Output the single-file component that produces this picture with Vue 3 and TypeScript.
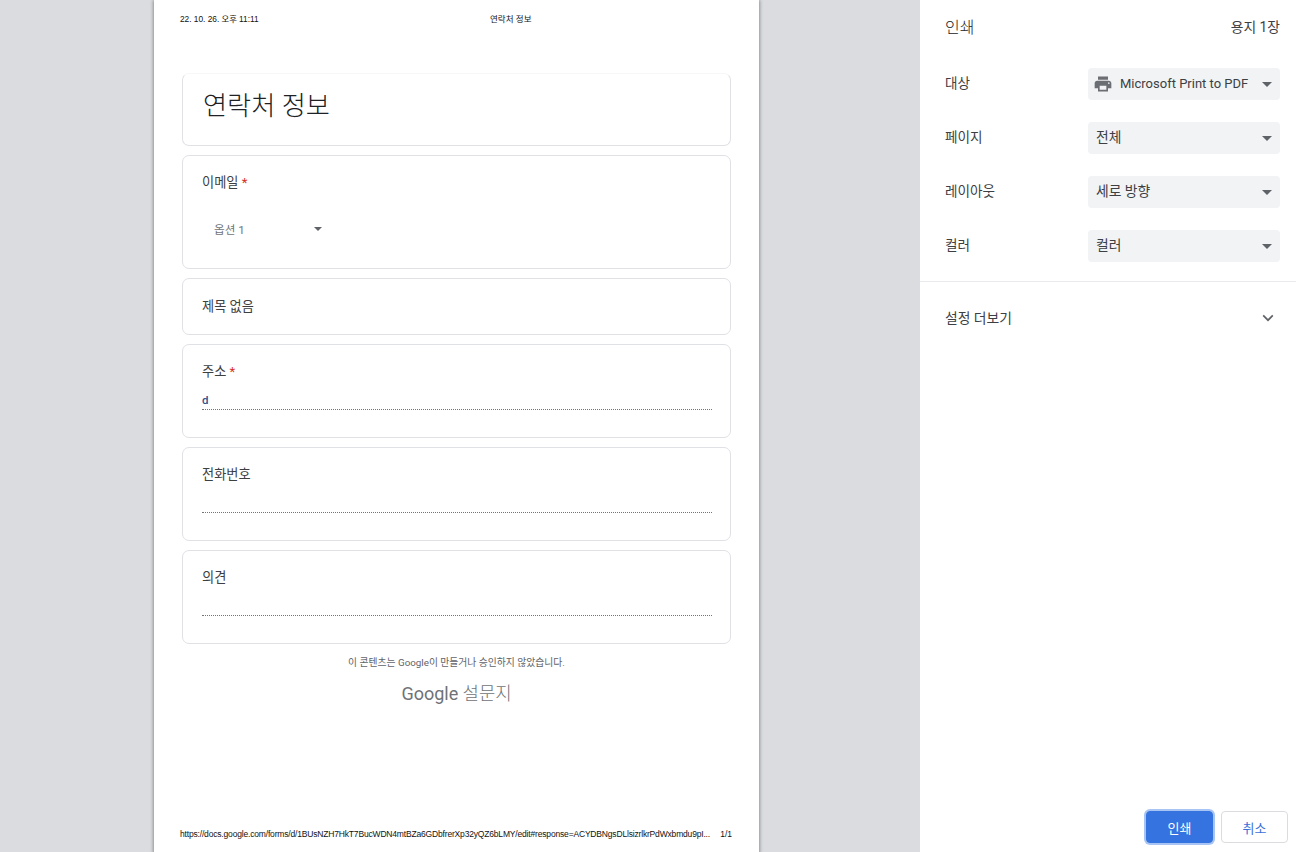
<script setup lang="ts">
interface Field { label: string; required: boolean; value?: string }
const lineFields: Field[] = [
  { label: '주소', required: true, value: 'd' },
  { label: '전화번호', required: false },
  { label: '의견', required: false },
]
const settings = [
  { label: '대상', value: 'Microsoft Print to PDF', icon: true },
  { label: '페이지', value: '전체', icon: false },
  { label: '레이아웃', value: '세로 방향', icon: false },
  { label: '컬러', value: '컬러', icon: false },
]
</script>

<template>
  <div class="app">
    <main class="preview">
      <section class="page">
        <header class="page-head">
          <span class="head-date">22. 10. 26. 오후 11:11</span>
          <span class="head-title">연락처 정보</span>
        </header>
        <div class="form">
          <div class="card title-card"><h1>연락처 정보</h1></div>
          <div class="card email-card">
            <div class="q">이메일 <span class="req">*</span></div>
            <div class="dropdown">
              <span>옵션 1</span>
              <i class="tri small"></i>
            </div>
          </div>
          <div class="card untitled-card"><div class="q">제목 없음</div></div>
          <div v-for="f in lineFields" :key="f.label" class="card line-card">
            <div class="q">{{ f.label }} <span v-if="f.required" class="req">*</span></div>
            <div class="answer">{{ f.value }}</div>
          </div>
        </div>
        <p class="disclaimer">이 콘텐츠는 Google이 만들거나 승인하지 않았습니다.</p>
        <div class="brand"><span class="brand-g">Google</span> <span class="brand-k">설문지</span></div>
        <footer class="page-foot">
          <span class="url">https://docs.google.com/forms/d/1BUsNZH7HkT7BucWDN4mtBZa6GDbfrerXp32yQZ6bLMY/edit#response=ACYDBNgsDLlsizrlkrPdWxbmdu9pI...</span>
          <span>1/1</span>
        </footer>
      </section>
    </main>
    <aside class="side">
      <div class="side-head">
        <h2>인쇄</h2>
        <span class="sheets">용지 1장</span>
      </div>
      <div class="settings">
        <div v-for="s in settings" :key="s.label" class="row">
          <span class="row-label">{{ s.label }}</span>
          <div class="select" :class="{ 'has-icon': s.icon }">
            <svg v-if="s.icon" class="printer" viewBox="0 0 24 24" width="20" height="20">
              <path fill="#6b6e72" d="M19 8H5c-1.66 0-3 1.34-3 3v6h4v4h12v-4h4v-6c0-1.66-1.34-3-3-3zm-3 11H8v-5h8v5zm3-7c-.55 0-1-.45-1-1s.45-1 1-1 1 .45 1 1-.45 1-1 1zm-1-9H6v4h12V3z" />
            </svg>
            <span class="select-text">{{ s.value }}</span>
            <i class="tri"></i>
          </div>
        </div>
      </div>
      <div class="more">
        <span>설정 더보기</span>
        <svg viewBox="0 0 12 8" width="12" height="8">
          <path d="M1.2 1.4 6 6.2l4.8-4.8" fill="none" stroke="#5f6368" stroke-width="1.7" />
        </svg>
      </div>
      <div class="actions">
        <button class="btn primary">인쇄</button>
        <button class="btn">취소</button>
      </div>
    </aside>
  </div>
</template>

<style>
html, body { margin: 0; height: 100%; overflow: hidden; }
</style>

<style scoped>
.app {
  display: flex;
  width: 1296px;
  height: 852px;
  overflow: hidden;
  font-family: Roboto, "Noto Sans CJK KR", sans-serif;
  color: #202124;
}
.preview {
  width: 920px;
  flex: none;
  background: #dadce0;
  padding-left: 154px;
  box-sizing: border-box;
}
.page {
  width: 605px;
  height: 852px;
  background: #fff;
  box-shadow: 0 1px 3px 1px rgba(60, 64, 67, .45);
  display: flex;
  flex-direction: column;
  padding: 0 28px 0 26px;
  box-sizing: border-box;
}
.page-head {
  display: flex;
  height: 73px;
  padding-top: 13px;
  box-sizing: border-box;
  font: 8.3px/12px "Liberation Sans", "Noto Sans CJK KR", sans-serif;
  color: #111;
  flex: none;
}
.head-date { width: 310px; }
.head-title { font-size: 8.5px; }
.form {
  display: flex;
  flex-direction: column;
  gap: 9px;
  margin-left: 2px;
  width: 549px;
}
.card {
  border: 1px solid #dfe1e5;
  border-radius: 7px;
  box-sizing: border-box;
  padding: 0 18px;
  background: #fff;
}
.title-card {
  height: 73px;
  border-top-color: #f6f7f8;
  padding-top: 15px;
  padding-left: 20px;
}
h1 {
  margin: 0;
  font-size: 26.2px;
  line-height: 34px;
  font-weight: 300;
  color: #202124;
}
.q { font-size: 13.2px; line-height: 18px; color: #3c4043; padding-left: 1px; }
.req { color: #d93025; }
.email-card { height: 114px; padding-top: 18px; }
.dropdown {
  display: flex;
  align-items: center;
  margin-top: 25px;
  margin-left: 13px;
  width: 108px;
  height: 24px;
  justify-content: space-between;
  font-size: 11.6px;
  color: #70757a;
}
.untitled-card { height: 57px; padding-top: 19px; }
.line-card { height: 94px; padding-top: 18px; }
.answer {
  margin: 13px 0 0 1px;
  height: 15px;
  line-height: 13px;
  font-size: 11.5px;
  font-weight: 500;
  color: #2f4f8f;
  border-bottom: 1px dotted #70757a;
}
.disclaimer {
  margin: 12px 0 0 2px;
  width: 549px;
  text-align: center;
  font-size: 9.8px;
  line-height: 14px;
  color: #5f6368;
}
.brand {
  margin: 12px 0 0 2px;
  width: 549px;
  text-align: center;
  font-size: 17.8px;
  line-height: 24px;
  font-weight: 300;
  color: #6f7276;
}
.brand-g { font-size: 18px; font-weight: 400; }
.page-foot {
  margin-top: auto;
  display: flex;
  justify-content: space-between;
  height: 24px;
  font: 8.5px/12px "Liberation Sans", sans-serif;
  color: #111;
  white-space: nowrap;
  width: 552px;
}
.url { letter-spacing: -.175px; }

.side {
  width: 376px;
  flex: none;
  background: #fff;
  display: flex;
  flex-direction: column;
  height: 852px;
}
.side-head {
  display: flex;
  justify-content: space-between;
  align-items: center;
  height: 52px;
  padding: 0 16px 0 25px;
}
h2 { margin: 0; font-size: 16px; font-weight: 300; color: #202124; }
.sheets { font-size: 13.8px; color: #3c4043; }
.settings {
  display: flex;
  flex-direction: column;
  gap: 22px;
  padding: 16px 16px 19px 25px;
  border-bottom: 1px solid #e8eaed;
}
.row {
  display: flex;
  justify-content: space-between;
  align-items: center;
}
.row-label { font-size: 13.6px; color: #3c4043; padding-bottom: 5px; }
.select {
  width: 192px;
  height: 32px;
  background: #f1f3f4;
  border-radius: 4px;
  display: flex;
  align-items: center;
  padding: 0 8px;
  box-sizing: border-box;
  font-size: 13.8px;
  color: #3c4043;
}
.printer { margin-left: -3px; margin-right: 7px; flex: none; }
.select-text { flex: 1; white-space: nowrap; padding-bottom: 5px; }
.has-icon .select-text { font-size: 13px; padding-bottom: 2px; }
.tri {
  display: block;
  width: 0;
  height: 0;
  border-left: 5px solid transparent;
  border-right: 5px solid transparent;
  border-top: 5px solid #5f6368;
  flex: none;
}
.tri.small {
  border-left-width: 4px;
  border-right-width: 4px;
  border-top-width: 4px;
}
.more {
  display: flex;
  justify-content: space-between;
  align-items: center;
  height: 72px;
  padding: 0 22px 0 25px;
  font-size: 13.8px;
  color: #3c4043;
}
.more span { padding-bottom: 3px; }
.actions {
  margin-top: auto;
  display: flex;
  justify-content: flex-end;
  gap: 8px;
  padding: 0 8px 9px 0;
}
.btn {
  width: 67px;
  height: 32px;
  border: 1px solid #dadce0;
  border-radius: 4px;
  background: #fff;
  font: 13px Roboto, "Noto Sans CJK KR", sans-serif;
  color: #3b6fd8;
  padding: 0;
}
.btn.primary {
  background: #3573e0;
  border-color: #3573e0;
  color: #fff;
  box-shadow: 0 0 0 2px #a8c4f4;
}
</style>
